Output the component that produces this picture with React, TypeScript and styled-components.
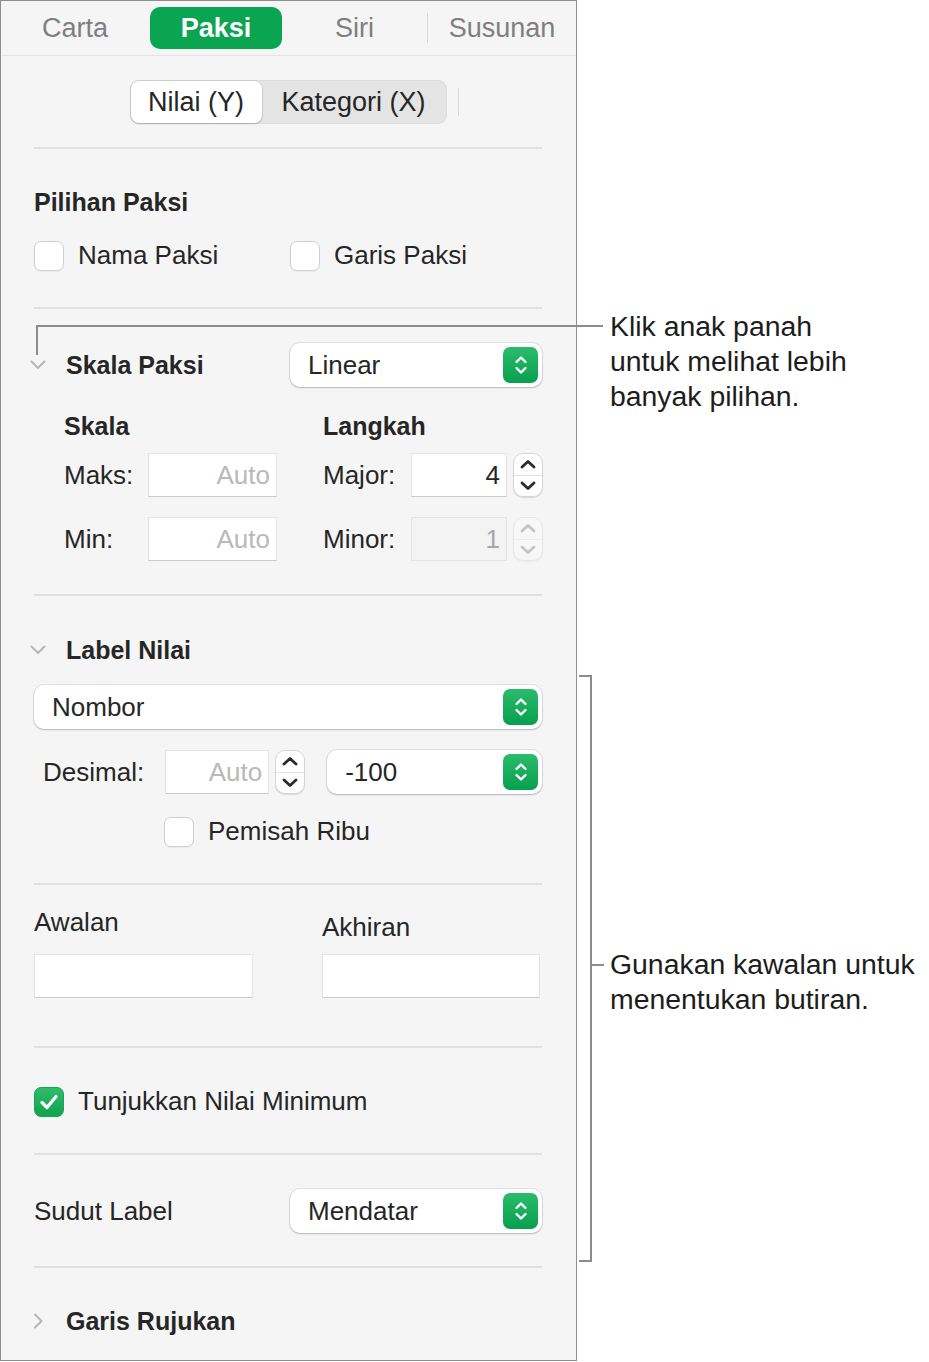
import React from 'react';
import styled, { createGlobalStyle, css } from 'styled-components';

const Global = createGlobalStyle`
  html, body { margin: 0; padding: 0; background: #ffffff; }
  body { font-family: "Liberation Sans", Arial, Helvetica, sans-serif; color: #262626; }
  * { box-sizing: border-box; }
`;

const Page = styled.div`
  position: relative;
  width: 929px;
  height: 1362px;
  display: flex;
  align-items: flex-start;
  overflow: hidden;
`;

const Panel = styled.div`
  width: 577px;
  height: 1361px;
  background: #f5f5f5;
  border: 1px solid #8e8e8e;
  display: flex;
  flex-direction: column;
`;

/* ---------- Tabs ---------- */
const TabBar = styled.div`
  height: 55px;
  flex: none;
  border-bottom: 1px solid #e3e3e3;
  display: flex;
  align-items: center;
  padding-left: 7px;
`;

const Tab = styled.div<{ $w?: number; $active?: boolean }>`
  ${p => (p.$w ? css`width: ${p.$w}px; flex: none;` : css`flex: 1;`)}
  height: 42px;
  display: flex;
  align-items: center;
  justify-content: center;
  font-size: 27px;
  color: #7f7f7f;
  border-radius: 10px;
  ${p =>
    p.$active &&
    css`
      background: #0ba551;
      color: #ffffff;
      font-weight: 700;
    `}
`;

const TabSep = styled.div`
  width: 1px;
  height: 30px;
  background: #dadada;
  flex: none;
`;

/* ---------- Content ---------- */
const Content = styled.div`
  padding: 0 34px 0 33px;
  display: flex;
  flex-direction: column;
`;

const SegRow = styled.div`
  margin-top: 24px;
  display: grid;
  grid-template-columns: 1fr auto 1fr;
  align-items: center;
`;

const Segmented = styled.div`
  grid-column: 2;
  height: 44px;
  display: flex;
  background: #e4e4e4;
  border-radius: 9px;
  padding: 1px;
  box-shadow: inset 0 0 0 1px #dcdcdc;
`;

const Segment = styled.div<{ $w: number; $active?: boolean }>`
  width: ${p => p.$w}px;
  display: flex;
  align-items: center;
  justify-content: center;
  font-size: 27px;
  color: #262626;
  border-radius: 8px;
  ${p =>
    p.$active &&
    css`
      background: #ffffff;
      box-shadow: 0 0 0 1px rgba(0, 0, 0, 0.06), 0 1px 2px rgba(0, 0, 0, 0.18);
    `}
`;

const SegTail = styled.div`
  grid-column: 3;
  justify-self: start;
  margin-left: 11px;
  width: 1px;
  height: 28px;
  background: #dadada;
`;

const Divider = styled.div<{ $top: number }>`
  margin-top: ${p => p.$top}px;
  height: 2px;
  background: #e0e0e0;
  flex: none;
`;

const Heading = styled.div<{ $top: number; $indent?: number }>`
  margin-top: ${p => p.$top}px;
  margin-left: ${p => p.$indent ?? 0}px;
  height: 40px;
  display: flex;
  align-items: center;
  font-size: 25px;
  font-weight: 700;
  color: #262626;
`;

const CheckRow = styled.div<{ $top: number; $cols?: string; $indent?: number }>`
  margin-top: ${p => p.$top}px;
  margin-left: ${p => p.$indent ?? 0}px;
  height: 30px;
  display: grid;
  grid-template-columns: ${p => p.$cols ?? '1fr'};
  align-items: center;
`;

const CheckItem = styled.label`
  display: flex;
  align-items: center;
  gap: 14px;
  font-size: 26px;
  color: #262626;
  white-space: nowrap;
`;

const Box = styled.span<{ $checked?: boolean }>`
  width: 30px;
  height: 30px;
  flex: none;
  border-radius: 7px;
  background: #ffffff;
  border: 1px solid #cfcfcf;
  box-shadow: 0 1px 1px rgba(0, 0, 0, 0.05);
  display: flex;
  align-items: center;
  justify-content: center;
  ${p =>
    p.$checked &&
    css`
      background: linear-gradient(#2fbc6b, #10a24f);
      border-color: #17a455;
    `}
`;

const DisclosureRow = styled.div<{ $top: number }>`
  margin-top: ${p => p.$top}px;
  height: 44px;
  display: flex;
  align-items: center;
`;

const Chevron = styled.span`
  width: 20px;
  margin-left: -6px;
  margin-right: 18px;
  display: flex;
  justify-content: center;
  align-items: center;
  flex: none;
`;

const SectionTitle = styled.div`
  font-size: 25px;
  font-weight: 700;
  color: #262626;
  flex: 1;
`;

const Popup = styled.div<{ $w?: number }>`
  ${p => (p.$w ? css`width: ${p.$w}px; flex: none;` : css`flex: 1;`)}
  height: 44px;
  background: #ffffff;
  border-radius: 10px;
  box-shadow: 0 0 0 1px rgba(0, 0, 0, 0.07), 0 1px 2px rgba(0, 0, 0, 0.2);
  display: flex;
  align-items: center;
  justify-content: space-between;
  padding: 0 4px 0 18px;
  font-size: 26px;
  color: #262626;
`;

const GreenBtn = styled.span`
  width: 35px;
  height: 36px;
  border-radius: 7px;
  background: linear-gradient(#2bbb6d, #07a04e);
  display: flex;
  align-items: center;
  justify-content: center;
`;

const ScaleGrid = styled.div`
  margin-left: 30px;
  margin-top: 21px;
  display: grid;
  grid-template-columns: 84px 129px 46px 88px 96px 6px 30px;
  grid-template-rows: 45px 44px 20px 44px;
  align-items: center;
`;

const GridHead = styled.div<{ $col: number; $span: number }>`
  grid-column: ${p => p.$col} / span ${p => p.$span};
  grid-row: 1;
  align-self: start;
  height: 36px;
  display: flex;
  align-items: center;
  font-size: 25px;
  font-weight: 700;
  color: #262626;
`;

const FieldLabel = styled.div<{ $col?: number; $row?: number }>`
  ${p => p.$col && css`grid-column: ${p.$col};`}
  ${p => p.$row && css`grid-row: ${p.$row};`}
  font-size: 26px;
  color: #262626;
  white-space: nowrap;
`;

const Field = styled.div<{
  $w?: number;
  $col?: number;
  $row?: number;
  $tone?: 'placeholder' | 'value' | 'disabled';
}>`
  ${p => p.$col && css`grid-column: ${p.$col};`}
  ${p => p.$row && css`grid-row: ${p.$row};`}
  ${p => (p.$w ? css`width: ${p.$w}px; flex: none;` : '')}
  height: 44px;
  background: ${p => (p.$tone === 'disabled' ? '#f3f3f3' : '#ffffff')};
  border: 1px solid #e4e4e4;
  border-bottom-color: ${p => (p.$tone === 'disabled' ? '#e4e4e4' : '#cbcbcb')};
  display: flex;
  align-items: center;
  justify-content: flex-end;
  padding-right: 6px;
  font-size: 26px;
  color: ${p => (p.$tone === 'value' ? '#262626' : p.$tone === 'disabled' ? '#a8a8a8' : '#b9b9b9')};
`;

const Stepper = styled.div<{ $col?: number; $row?: number; $disabled?: boolean }>`
  ${p => p.$col && css`grid-column: ${p.$col};`}
  ${p => p.$row && css`grid-row: ${p.$row};`}
  width: 30px;
  height: 44px;
  flex: none;
  border-radius: 10px;
  background: ${p => (p.$disabled ? '#f7f7f7' : '#ffffff')};
  border: 1px solid ${p => (p.$disabled ? '#e6e6e6' : '#d6d6d6')};
  box-shadow: 0 1px 1px rgba(0, 0, 0, ${p => (p.$disabled ? 0.04 : 0.12)});
  display: flex;
  flex-direction: column;
`;

const StepHalf = styled.div<{ $first?: boolean; $disabled?: boolean }>`
  flex: 1;
  display: flex;
  align-items: center;
  justify-content: center;
  ${p => p.$first && css`border-bottom: 1px solid ${p.$disabled ? '#ececec' : '#e3e3e3'};`}
`;

const Row = styled.div<{ $top: number; $indent?: number }>`
  margin-top: ${p => p.$top}px;
  margin-left: ${p => p.$indent ?? 0}px;
  height: 44px;
  display: flex;
  align-items: center;
`;

const Spacer = styled.div<{ $w: number }>`
  width: ${p => p.$w}px;
  flex: none;
`;

const AffixGrid = styled.div`
  margin-top: 22px;
  display: grid;
  grid-template-columns: 287px 1fr;
`;

const AffixCol = styled.div<{ $shift?: number; $inset?: number }>`
  display: flex;
  flex-direction: column;
  padding-top: ${p => p.$shift ?? 0}px;
  padding-left: ${p => p.$inset ?? 0}px;
`;

const AffixLabel = styled.div<{ $gap: number }>`
  height: 30px;
  display: flex;
  align-items: center;
  font-size: 26px;
  color: #262626;
  margin-bottom: ${p => p.$gap}px;
`;

const PlainLabel = styled.div`
  font-size: 26px;
  color: #262626;
  flex: 1;
`;

/* ---------- Annotations ---------- */
const Line = styled.div<{ $x: number; $y: number; $w: number; $h: number }>`
  position: absolute;
  left: ${p => p.$x}px;
  top: ${p => p.$y}px;
  width: ${p => p.$w}px;
  height: ${p => p.$h}px;
  background: #8c8c8c;
`;

const Note = styled.div<{ $y: number }>`
  position: absolute;
  left: 610px;
  top: ${p => p.$y}px;
  font-size: 28.4px;
  line-height: 35px;
  color: #1d1d1d;
  white-space: nowrap;
`;

/* ---------- Icons ---------- */
const UpDown = () => (
  <svg width="14" height="24" viewBox="0 0 14 24" fill="none">
    <path d="M2.5 9 L7 4.5 L11.5 9" stroke="#fff" strokeWidth="2.4" strokeLinecap="round" strokeLinejoin="round" />
    <path d="M2.5 15 L7 19.5 L11.5 15" stroke="#fff" strokeWidth="2.4" strokeLinecap="round" strokeLinejoin="round" />
  </svg>
);

const StepChevron = ({ dir, color }: { dir: 'up' | 'down'; color: string }) => (
  <svg width="16" height="10" viewBox="0 0 16 10" fill="none">
    <path
      d={dir === 'up' ? 'M2 8 L8 2.5 L14 8' : 'M2 2 L8 7.5 L14 2'}
      stroke={color}
      strokeWidth="2.8"
      strokeLinecap="round"
      strokeLinejoin="round"
    />
  </svg>
);

const DisclosureIcon = ({ open }: { open: boolean }) =>
  open ? (
    <svg width="16" height="10" viewBox="0 0 16 10" fill="none">
      <path d="M1.5 1.5 L8 8 L14.5 1.5" stroke="#b5b5b5" strokeWidth="2" strokeLinecap="round" strokeLinejoin="round" />
    </svg>
  ) : (
    <svg width="10" height="16" viewBox="0 0 10 16" fill="none">
      <path d="M2 1.5 L8.5 8 L2 14.5" stroke="#b5b5b5" strokeWidth="2" strokeLinecap="round" strokeLinejoin="round" />
    </svg>
  );

const CheckMark = () => (
  <svg width="20" height="18" viewBox="0 0 20 18" fill="none">
    <path d="M3 9.5 L8 14.5 L17 3.5" stroke="#fff" strokeWidth="3.2" strokeLinecap="round" strokeLinejoin="round" />
  </svg>
);

const PopupButton = ({ label, w }: { label: string; w?: number }) => (
  <Popup $w={w}>
    <span>{label}</span>
    <GreenBtn>
      <UpDown />
    </GreenBtn>
  </Popup>
);

const StepperControl = ({ col, row, disabled }: { col?: number; row?: number; disabled?: boolean }) => {
  const c = disabled ? '#c4c4c4' : '#2a2a2a';
  return (
    <Stepper $col={col} $row={row} $disabled={disabled}>
      <StepHalf $first $disabled={disabled}>
        <StepChevron dir="up" color={c} />
      </StepHalf>
      <StepHalf>
        <StepChevron dir="down" color={c} />
      </StepHalf>
    </Stepper>
  );
};

export default function App() {
  return (
    <Page>
      <Global />
      <Panel>
        <TabBar>
          <Tab $w={134}>Carta</Tab>
          <Spacer $w={8} />
          <Tab $w={132} $active>
            Paksi
          </Tab>
          <Tab $w={145}>Siri</Tab>
          <TabSep />
          <Tab>Susunan</Tab>
        </TabBar>

        <Content>
          <SegRow>
            <Segmented>
              <Segment $w={131} $active>
                Nilai (Y)
              </Segment>
              <Segment $w={184}>Kategori (X)</Segment>
            </Segmented>
            <SegTail />
          </SegRow>

          <Divider $top={23} />

          <Heading $top={33}>Pilihan Paksi</Heading>
          <CheckRow $top={18} $cols="256px 1fr">
            <CheckItem>
              <Box />
              Nama Paksi
            </CheckItem>
            <CheckItem>
              <Box />
              Garis Paksi
            </CheckItem>
          </CheckRow>

          <Divider $top={37} />

          <DisclosureRow $top={34}>
            <Chevron>
              <DisclosureIcon open />
            </Chevron>
            <SectionTitle>Skala Paksi</SectionTitle>
            <PopupButton label="Linear" w={252} />
          </DisclosureRow>

          <ScaleGrid>
            <GridHead $col={1} $span={2}>Skala</GridHead>
            <GridHead $col={4} $span={4}>Langkah</GridHead>

            <FieldLabel $col={1} $row={2}>Maks:</FieldLabel>
            <Field $col={2} $row={2} $tone="placeholder">Auto</Field>
            <FieldLabel $col={4} $row={2}>Major:</FieldLabel>
            <Field $col={5} $row={2} $tone="value">4</Field>
            <StepperControl col={7} row={2} />

            <FieldLabel $col={1} $row={4}>Min:</FieldLabel>
            <Field $col={2} $row={4} $tone="placeholder">Auto</Field>
            <FieldLabel $col={4} $row={4}>Minor:</FieldLabel>
            <Field $col={5} $row={4} $tone="disabled">1</Field>
            <StepperControl col={7} row={4} disabled />
          </ScaleGrid>

          <Divider $top={33} />

          <DisclosureRow $top={32}>
            <Chevron>
              <DisclosureIcon open />
            </Chevron>
            <SectionTitle>Label Nilai</SectionTitle>
          </DisclosureRow>

          <Row $top={13}>
            <PopupButton label="Nombor" />
          </Row>

          <Row $top={21} $indent={9}>
            <FieldLabel>Desimal:</FieldLabel>
            <Spacer $w={21} />
            <Field $w={104} $tone="placeholder">Auto</Field>
            <Spacer $w={6} />
            <StepperControl />
            <Spacer $w={22} />
            <PopupButton label="-100" />
          </Row>

          <CheckRow $top={22} $indent={130}>
            <CheckItem>
              <Box />
              Pemisah Ribu
            </CheckItem>
          </CheckRow>

          <Divider $top={37} />

          <AffixGrid>
            <AffixCol>
              <AffixLabel $gap={17}>Awalan</AffixLabel>
              <Field $w={219} $tone="placeholder" />
            </AffixCol>
            <AffixCol $shift={5} $inset={1}>
              <AffixLabel $gap={12}>Akhiran</AffixLabel>
              <Field $w={218} $tone="placeholder" />
            </AffixCol>
          </AffixGrid>

          <Divider $top={48} />

          <CheckRow $top={38}>
            <CheckItem>
              <Box $checked>
                <CheckMark />
              </Box>
              Tunjukkan Nilai Minimum
            </CheckItem>
          </CheckRow>

          <Divider $top={37} />

          <Row $top={34}>
            <PlainLabel>Sudut Label</PlainLabel>
            <PopupButton label="Mendatar" w={252} />
          </Row>

          <Divider $top={33} />

          <DisclosureRow $top={31}>
            <Chevron>
              <DisclosureIcon open={false} />
            </Chevron>
            <SectionTitle>Garis Rujukan</SectionTitle>
          </DisclosureRow>
        </Content>
      </Panel>

      {/* Callout: arrow hint */}
      <Line $x={36} $y={325} $w={567} $h={2} />
      <Line $x={36} $y={325} $w={2} $h={30} />
      <Note $y={309}>
        Klik anak panah
        <br />
        untuk melihat lebih
        <br />
        banyak pilihan.
      </Note>

      {/* Callout: bracket */}
      <Line $x={579} $y={675} $w={13} $h={2} />
      <Line $x={590} $y={675} $w={2} $h={587} />
      <Line $x={579} $y={1260} $w={13} $h={2} />
      <Line $x={590} $y={964} $w={14} $h={2} />
      <Note $y={947}>
        Gunakan kawalan untuk
        <br />
        menentukan butiran.
      </Note>
    </Page>
  );
}
